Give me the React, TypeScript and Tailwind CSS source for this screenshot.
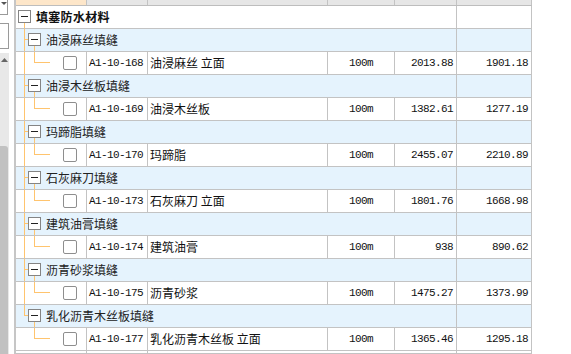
import React from "react";

type Item = {
  group: string;
  code: string;
  name: string;
  unit: string;
  price: string;
  cost: string;
};

const items: Item[] = [
  { group: "油浸麻丝填缝", code: "A1-10-168", name: "油浸麻丝 立面", unit: "100m", price: "2013.88", cost: "1901.18" },
  { group: "油浸木丝板填缝", code: "A1-10-169", name: "油浸木丝板", unit: "100m", price: "1382.61", cost: "1277.19" },
  { group: "玛蹄脂填缝", code: "A1-10-170", name: "玛蹄脂", unit: "100m", price: "2455.07", cost: "2210.89" },
  { group: "石灰麻刀填缝", code: "A1-10-173", name: "石灰麻刀 立面", unit: "100m", price: "1801.76", cost: "1668.98" },
  { group: "建筑油膏填缝", code: "A1-10-174", name: "建筑油膏", unit: "100m", price: "938", cost: "890.62" },
  { group: "沥青砂浆填缝", code: "A1-10-175", name: "沥青砂浆", unit: "100m", price: "1475.27", cost: "1373.99" },
  { group: "乳化沥青木丝板填缝", code: "A1-10-177", name: "乳化沥青木丝板 立面", unit: "100m", price: "1365.46", cost: "1295.18" },
];

const LINE = "#ffc46e";
const cjk = "font-['Noto_Sans_CJK_SC','Noto_Sans',sans-serif]";
const mono = "font-['Liberation_Mono',monospace] text-[11px] tracking-[-0.6px]";
const rowCls = "grid grid-cols-[71px_61px_180px_67px_62px_75px] h-[23px] border-b border-[#c3c3c3]";
const cell = "border-r border-[#c3c3c3] flex items-center";

const MinusBox = ({ x, y }: { x: number; y: number }) => (
  <g>
    <rect x={x + 0.5} y={y + 0.5} width={12} height={12} fill="#fff" stroke="#848484" />
    <line x1={x + 3} y1={y + 6.5} x2={x + 10} y2={y + 6.5} stroke="#222" />
  </g>
);

const TopRow = () => (
  <div className={rowCls}>
    <div className={`${cell} col-span-5 bg-white`}>
      <svg width={20} height={22} className="shrink-0">
        <line x1={8.5} y1={17} x2={8.5} y2={22} stroke={LINE} />
        <MinusBox x={2} y={4} />
      </svg>
      <span className={`${cjk} text-[12px] font-bold leading-none tracking-[0.3px] text-[#111]`}>填塞防水材料</span>
    </div>
    <div className={`${cell} bg-white`} />
  </div>
);

const GroupRow = ({ label, last }: { label: string; last: boolean }) => (
  <div className={rowCls}>
    <div className={`${cell} col-span-5 bg-[#e5f3fd]`}>
      <svg width={30} height={22} className="shrink-0">
        <line x1={8.5} y1={0} x2={8.5} y2={last ? 10.5 : 22} stroke={LINE} />
        <line x1={8} y1={10.5} x2={12} y2={10.5} stroke={LINE} />
        <line x1={18.5} y1={17} x2={18.5} y2={22} stroke={LINE} />
        <MinusBox x={12} y={4} />
      </svg>
      <span className={`${cjk} text-[12px] leading-none text-[#222]`}>{label}</span>
    </div>
    <div className={`${cell} bg-[#e5f3fd]`} />
  </div>
);

const ItemRow = ({ item, last }: { item: Item; last: boolean }) => (
  <div className={rowCls}>
    <div className={`${cell} bg-white`}>
      <svg width={47} height={22} className="shrink-0">
        {!last && <line x1={8.5} y1={0} x2={8.5} y2={22} stroke={LINE} />}
        <line x1={18.5} y1={0} x2={18.5} y2={10.5} stroke={LINE} />
        <line x1={18} y1={10.5} x2={34} y2={10.5} stroke={LINE} />
      </svg>
      <div className="w-[14px] h-[14px] rounded-[2px] border border-[#8e8e8e] bg-white" />
    </div>
    <div className={`${cell} bg-white pl-[2px] ${mono} text-[#111]`}>{item.code}</div>
    <div className={`${cell} bg-white pl-[2px] ${cjk} text-[12px] leading-none text-[#111] whitespace-pre`}>{item.name}</div>
    <div className={`${cell} bg-white justify-center ${mono} text-[#111]`}>{item.unit}</div>
    <div className={`${cell} bg-white justify-end pr-[3px] ${mono} text-[#111]`}>{item.price}</div>
    <div className={`${cell} bg-white justify-end pr-[3px] ${mono} text-[#111]`}>{item.cost}</div>
  </div>
);

function SidePanel() {
  return (
    <div className="w-[14px] h-full flex flex-col bg-white shrink-0">
      <div className="w-[8px] h-[15px] border-r border-b border-[#9a9a9a] bg-white flex justify-center pt-[2px]">
        <svg width={6} height={4}>
          <polygon points="0,0 6,0 3,3" fill="#555" />
        </svg>
      </div>
      <div className="mt-[8px] w-[9px] h-[26px] border border-l-0 border-[#9a9a9a] bg-white" />
      <div className="mt-[4px] w-[9px] flex-1 bg-[#e8e8e8] flex flex-col">
        <div className="h-[18px] flex justify-center pt-[5px] pr-[1px]">
          <svg width={7} height={4}>
            <polygon points="3.5,0 7,4 0,4" fill="#666" />
          </svg>
        </div>
        <div className="mt-[75px] w-[8px] flex-1 rounded-tr-[3px] bg-[#c1c1c1]" />
      </div>
    </div>
  );
}

export default function App() {
  return (
    <div className="w-[571px] h-[354px] overflow-hidden bg-white flex">
      <SidePanel />
      <div className="w-[2px] h-full bg-[#c6c6c6] shrink-0" />
      <div className="w-[516px] shrink-0 flex flex-col">
        <div className="grid grid-cols-[71px_61px_180px_67px_62px_75px] h-[6px] border-b border-[#bdbdbd] shrink-0">
          <div className="bg-[#fde6c9] border-r border-[#c3c3c3]" />
          <div className="bg-[#e6e6e6] border-r border-[#c3c3c3]" />
          <div className="bg-[#e6e6e6] border-r border-[#c3c3c3]" />
          <div className="bg-[#e6e6e6] border-r border-[#c3c3c3]" />
          <div className="bg-[#e6e6e6] border-r border-[#c3c3c3]" />
          <div className="bg-[#e6e6e6] border-r border-[#c3c3c3]" />
        </div>
        <TopRow />
        {items.map((it, i) => (
          <React.Fragment key={it.code}>
            <GroupRow label={it.group} last={i === items.length - 1} />
            <ItemRow item={it} last={i === items.length - 1} />
          </React.Fragment>
        ))}
        <div className={rowCls}>
          <div className={`${cell} bg-white`} />
          <div className={`${cell} bg-white`} />
          <div className={`${cell} col-span-3 bg-white`} />
          <div className={`${cell} bg-white`} />
        </div>
      </div>
    </div>
  );
}
